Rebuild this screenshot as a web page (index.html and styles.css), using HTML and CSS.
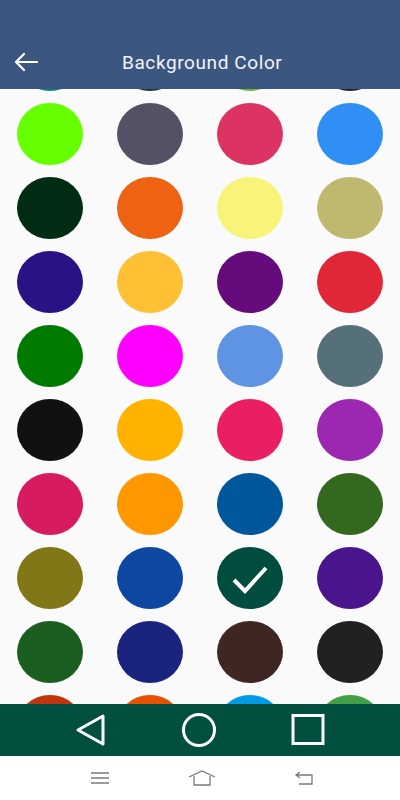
FILE: index.html
```html
<!doctype html>
<html>
<head>
    <title>Background Color</title>
    <meta charset="utf-8">
    <link rel="stylesheet" href="styles.css">
</head>
<body>
    <div class="screen">
        <header class="app-bar">
            <svg class="back" width="24" height="20" viewBox="0 0 24 20">
                <path d="M23 10H2M10 2L2 10l8 8" fill="none" stroke="#fff" stroke-width="2.2" stroke-linecap="round" stroke-linejoin="round"/>
            </svg>
            <h1>Background Color</h1>
        </header>

        <section class="colors">
            <div class="color-grid">
                <span class="dot" style="background:#00897b"></span>
                <span class="dot" style="background:#263238"></span>
                <span class="dot" style="background:#7cb342"></span>
                <span class="dot" style="background:#212121"></span>

                <span class="dot" style="background:#66ff00"></span>
                <span class="dot" style="background:#555064"></span>
                <span class="dot" style="background:#dc3462"></span>
                <span class="dot" style="background:#2f8ff4"></span>

                <span class="dot" style="background:#002c14"></span>
                <span class="dot" style="background:#ee6214"></span>
                <span class="dot" style="background:#f8f47a"></span>
                <span class="dot" style="background:#bfb86f"></span>

                <span class="dot" style="background:#2a1285"></span>
                <span class="dot" style="background:#fec034"></span>
                <span class="dot" style="background:#660b7c"></span>
                <span class="dot" style="background:#e12637"></span>

                <span class="dot" style="background:#007b00"></span>
                <span class="dot" style="background:#ff00ff"></span>
                <span class="dot" style="background:#5f94e3"></span>
                <span class="dot" style="background:#56707a"></span>

                <span class="dot" style="background:#111111"></span>
                <span class="dot" style="background:#ffb300"></span>
                <span class="dot" style="background:#e91e63"></span>
                <span class="dot" style="background:#9c27b0"></span>

                <span class="dot" style="background:#d81b60"></span>
                <span class="dot" style="background:#ff9800"></span>
                <span class="dot" style="background:#01579b"></span>
                <span class="dot" style="background:#33691e"></span>

                <span class="dot" style="background:#827717"></span>
                <span class="dot" style="background:#0d47a1"></span>
                <span class="dot selected" style="background:#004d40">
                    <svg width="40" height="32" viewBox="0 0 40 32">
                        <path d="M4 18l11 11L36 6" fill="none" stroke="#fff" stroke-width="4"/>
                    </svg>
                </span>
                <span class="dot" style="background:#4a148c"></span>

                <span class="dot" style="background:#1b5e20"></span>
                <span class="dot" style="background:#1a237e"></span>
                <span class="dot" style="background:#3e2723"></span>
                <span class="dot" style="background:#212121"></span>

                <span class="dot" style="background:#bf360c"></span>
                <span class="dot" style="background:#e65100"></span>
                <span class="dot" style="background:#039be5"></span>
                <span class="dot" style="background:#43a047"></span>
            </div>
        </section>

        <nav class="nav-bar">
            <svg width="32" height="34" viewBox="0 0 32 34">
                <path d="M28 3L3 17l25 14z" fill="none" stroke="#fff" stroke-width="3" stroke-linejoin="round"/>
            </svg>
            <svg width="36" height="36" viewBox="0 0 36 36">
                <circle cx="18" cy="18" r="15.5" fill="none" stroke="#fff" stroke-width="3"/>
            </svg>
            <svg width="34" height="32" viewBox="0 0 34 32">
                <rect x="2" y="1.5" width="30" height="28" fill="none" stroke="#fff" stroke-width="3"/>
            </svg>
        </nav>

        <div class="sys-bar">
            <svg width="20" height="14" viewBox="0 0 20 14">
                <path d="M1 2h18M1 7h18M1 12h18" stroke="#7a7a7a" stroke-width="1.3"/>
            </svg>
            <svg width="28" height="16" viewBox="0 0 28 16">
                <path d="M1 7L14 1l13 6M6 6v9h16V6" fill="none" stroke="#7a7a7a" stroke-width="1.3"/>
            </svg>
            <svg width="20" height="14" viewBox="0 0 20 14">
                <path d="M6 1L2 4l4 3M2 4h16v9H5" fill="none" stroke="#7a7a7a" stroke-width="1.3"/>
            </svg>
        </div>
    </div>
</body>
</html>
```

FILE: styles.css
```css
* {
    margin: 0;
    padding: 0;
    box-sizing: border-box;
}

body {
    background: #fafafa;
    font-family: Roboto, 'Noto Sans', sans-serif;
}

.screen {
    width: 400px;
    height: 800px;
    display: flex;
    flex-direction: column;
    overflow: hidden;
}

.app-bar {
    height: 89px;
    flex: none;
    background: #3b5780;
    display: flex;
    align-items: flex-end;
    padding: 0 0 17px 14px;
    color: #f2f4f8;
}

.app-bar .back {
    flex: none;
}

.app-bar h1 {
    font-size: 19px;
    font-weight: 400;
    letter-spacing: 0.6px;
    margin-left: 84px;
    line-height: 22px;
    position: relative;
    top: 2px;
}

.colors {
    height: 615px;
    flex: none;
    overflow: hidden;
    background: #fafafa;
}

.color-grid {
    display: grid;
    grid-template-columns: repeat(4, 100px);
    row-gap: 12px;
    margin-top: -60px;
}

.dot {
    width: 66px;
    height: 62px;
    border-radius: 50%;
    justify-self: center;
    display: flex;
    align-items: center;
    justify-content: center;
}

.nav-bar {
    height: 52px;
    flex: none;
    background: #004f3f;
    display: flex;
    align-items: center;
    justify-content: space-between;
    padding: 0 75px 0 75px;
}

.sys-bar {
    height: 44px;
    flex: none;
    background: #ffffff;
    display: flex;
    align-items: center;
    justify-content: space-between;
    padding: 0 86px 0 90px;
}
```
